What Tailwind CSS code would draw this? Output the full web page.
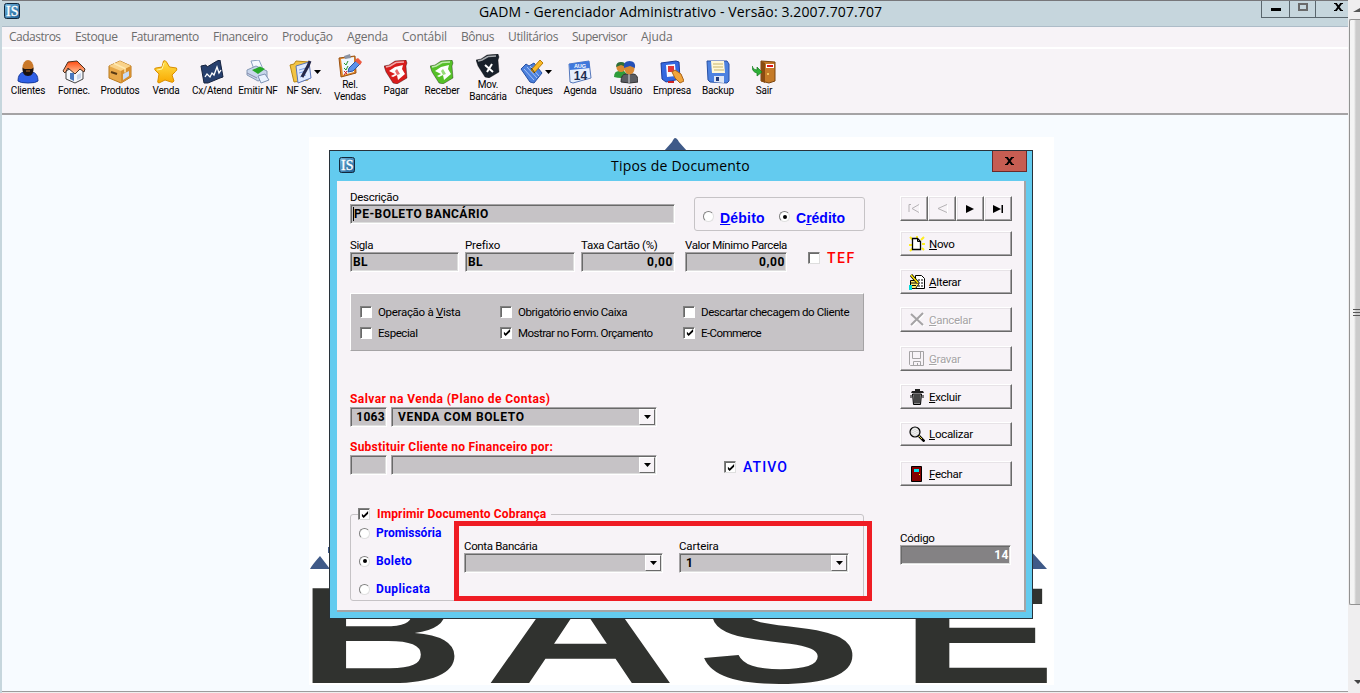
<!DOCTYPE html>
<html lang="pt-BR">
<head>
<meta charset="utf-8">
<title>GADM - Gerenciador Administrativo</title>
<script src="https://cdn.jsdelivr.net/npm/@tailwindcss/browser@4"></script>
</head>
<body class="w-[1360px] h-[693px] overflow-hidden bg-[#f0f0f0] font-['Roboto',sans-serif] text-[11.5px] leading-[14px] tracking-[-0.42px] text-black">
<svg class="absolute size-0">
  <defs>
    <linearGradient id="gOrange" x1="0" y1="0" x2="0" y2="1"><stop offset="0" stop-color="#ffe04a"/><stop offset="1" stop-color="#f9a800"/></linearGradient>
    <linearGradient id="gRoof" x1="0" y1="0" x2="0" y2="1"><stop offset="0" stop-color="#ff4a10"/><stop offset="1" stop-color="#ffc9a0"/></linearGradient>
    <linearGradient id="gIS" x1="0" y1="0" x2="1" y2="1"><stop offset="0" stop-color="#6fb4de"/><stop offset="1" stop-color="#1f5f93"/></linearGradient>
    <symbol id="is" viewBox="0 0 16 16"><rect x=".5" y=".5" width="15" height="15" rx="2" fill="url(#gIS)" stroke="#12283c"/><text x="2" y="12.600" font-family="Liberation Serif, serif" font-size="14" letter-spacing="0" fill="#fff" stroke="#fff" stroke-width=".3">IS</text></symbol>
    <symbol id="check" viewBox="0 0 9 9"><path d="M1 3v3l2 2 5-5V0L3 5z" fill="#000"/></symbol>
    <symbol id="wallet" viewBox="0 0 24 24"><path d="M0 6 5 5l6-4 11-1 1 3-1 3 1 12-10 6-4-1L2 12z" fill="currentColor" stroke="#00000055"/><path d="m2 7 4-1 6-3.500 8-.5" fill="none" stroke="#ffffffa0" stroke-width="1.500"/></symbol>
  </defs>
</svg>
<div class="flex h-[693px]">
  <!-- main window -->
  <div class="relative flex w-[1348px] flex-col overflow-hidden border-l-2 border-[#c6d6dd] bg-[#f7fbff]">
    <header class="flex h-[27px] shrink-0 items-start border-t border-b border-t-[#77777a] border-b-[#adbcc8] bg-[#c6d6dd]">
      <svg class="ml-[2px] mt-[2px] size-4"><use href="#is"/></svg>
      <h1 class="ml-[459px] mt-[1px] w-[410px] whitespace-nowrap font-['Open_Sans',sans-serif] text-[14px] leading-[20px] tracking-[0.12px]">GADM - Gerenciador Administrativo - Versão: 3.2007.707.707</h1>
      <div class="ml-auto flex h-[17px] border-b border-l border-[#5a666d]">
        <div class="flex w-7 justify-center border-r border-[#5a666d] pt-[7px]"><span class="h-[3px] w-[10px] bg-black"></span></div>
        <div class="flex w-[26px] justify-center border-r border-[#5a666d] pt-[2px]"><span class="h-2 w-[10px] border-2 border-[#6a6a6a]"></span></div>
        <div class="flex w-8 justify-end pr-[5px] pt-[2px]"><svg class="h-2 w-[9px]" viewBox="0 0 9 8"><path d="M1.500 0 7.500 8M7.500 0 1.500 8" stroke="#000" stroke-width="2"/><path d="M0 .5h3M6 .5h3M0 7.500h3M6 7.500h3" stroke="#000"/></svg></div>
      </div>
    </header>
    <nav class="flex h-5 shrink-0 items-center bg-[#f7f3f7] pl-[7px] font-['Open_Sans',sans-serif] text-[12px] tracking-[-0.1px] text-[#6d6d6d]">
      <span class="w-[66px] tracking-[-0.5px]">Cadastros</span><span class="w-[56px] tracking-[-0.4px]">Estoque</span><span class="w-[82px] tracking-[-0.45px]">Faturamento</span><span class="w-[69px] tracking-[-0.35px]">Financeiro</span><span class="w-[65px] tracking-[-0.4px]">Produção</span><span class="w-[55px] tracking-[-0.2px]">Agenda</span><span class="w-[59px] tracking-[-0.2px]">Contábil</span><span class="w-[47px] tracking-[-0.5px]">Bônus</span><span class="w-[64px] tracking-[-0.35px]">Utilitários</span><span class="w-[69px] tracking-[-0.5px]">Supervisor</span><span>Ajuda</span>
    </nav>
    <div class="flex h-[68px] shrink-0 items-start border-t-2 border-b-2 border-t-white border-b-[#a5a3a5] bg-[#f7f3f7] pl-[3px] text-center text-[10px] leading-[12px] tracking-[-0.2px] whitespace-nowrap *:flex *:w-[46px] *:flex-col *:items-center *:gap-[1px] *:pt-[11px]">
      <div><svg class="size-6" viewBox="0 0 24 24"><path d="M2 21q0-8 6-9h8q6 1 6 9-2 2-10 2T2 21z" fill="#2f5fe6" stroke="#173a9c"/><ellipse cx="12" cy="7.500" rx="5.500" ry="7.500" fill="#c9782a"/><path d="M6.500 7.500q2 2 3 1.500h5q1 .5 3-1.500.5 8.500-5.500 8.500t-5.500-8.500z" fill="#1a1210"/><path d="M10 11h4" stroke="#b06a2c"/></svg>Clientes</div>
      <div><svg class="size-6" viewBox="0 0 24 24"><path d="M4 11v8l9 4 8-4v-9l-6-5z" fill="#f4f6fb" stroke="#444"/><path d="M1 11 6 2l9-1 8 8-1 3-4-3-5 5-7-6-3 5z" fill="url(#gRoof)" stroke="#4a3020"/><path d="M8 13h4v8l-4-2z" fill="#4a78c0"/><path d="m15 15 4-2v5l-4 2z" fill="#c8d4ea"/></svg>Fornec.</div>
      <div><svg class="size-6" viewBox="0 0 24 24"><path d="M1 6 12 1l11 5v11l-10 6L1 18z" fill="#e8a84a" stroke="#b8781c"/><path d="M1 6 12 1l11 5-10 5z" fill="#f9d28a"/><path d="M13 11v12l10-6V6z" fill="#d68f30"/><path d="m6 3.500 11 5v4" stroke="#ffe8b0" fill="none" stroke-width="1.500"/><path d="m15 14 6-3v5l-6 4z" fill="#c8dcf8"/><path d="m3 12 6 2" stroke="#5a3a14" stroke-width="2"/></svg>Produtos</div>
      <div><svg class="size-6" viewBox="0 0 24 24"><path d="M9.500 1q2-1 3 1l3 5 7 1q1 2-1 3.500L18 15l2 6q-1 2-3 1l-6-2-6 3q-2 0-1-3l1-6-4-4q-1-2 1-2l6-1z" fill="url(#gOrange)" stroke="#d98e00"/><path d="m10 3-2 6-5 1" stroke="#fff3a8" fill="none"/></svg>Venda</div>
      <div><svg class="size-6" viewBox="0 0 24 24"><path d="m1 6 5-1 1 2 10-6 3-1 3 17-3 1-12 5H4z" fill="#27406e" stroke="#16233f"/><path d="m5 17 2-3 3 3 2-4 2 2 3-8 2 6 2-3" stroke="#fff" stroke-width="1.300" fill="none"/></svg>Cx/Atend</div>
      <div><svg class="size-6" viewBox="0 0 24 24"><path d="m5 1 8-1 4 9-8 3z" fill="#f6f9ff" stroke="#8aa0c0"/><path d="m1 10 9-4 11 5v7l-9 3-11-6z" fill="#c8d6ec" stroke="#8598b4"/><path d="m6 10 8-3.500 5 2.500-7 5z" fill="#26a82a"/><path d="m12 16 7-2 4 6-8 3z" fill="#eaf2ff" stroke="#7d92b4"/><path d="m1 13 10 5" stroke="#88a"/></svg>Emitir NF</div>
      <div><div class="flex items-center gap-[1px] self-center pl-[2px]"><svg class="size-6" viewBox="0 0 24 24"><path d="M1 5 5 4l2-3 13 1-1 18-14 2z" fill="#f3c445" stroke="#b98816"/><path d="m7 6 13-4 2 16-13 5z" fill="#dfe9ff" stroke="#5a74b8"/><path d="m10 10 7-2M10 13l7-2M11 17l6-2" stroke="#7a9fe6"/><path d="m21 1-2 5-6 11" fill="none" stroke="#26284a" stroke-width="3"/></svg><svg class="h-1 w-[7px]" viewBox="0 0 7 4"><path d="M0 0h7L3.500 4z"/></svg></div>NF Serv.</div>
      <div class="-mt-[6px]"><svg class="size-6" viewBox="0 0 24 24"><path d="m1 4 16-2 1 17-15 4z" fill="#e58a2c" stroke="#9a5010"/><path d="m3 5 13-2v15L5 21z" fill="#eef6ff"/><path d="m6 2 6-2 1 4-6 1z" fill="#8b93a3"/><path d="m6 9 2 2 2-4M6 14l2 2 2-4" stroke="#23962a" fill="none"/><path d="m6 17 3 3m0-3-3 4" stroke="#d42020"/><path d="m10 18 1-4 8-8 4 3-8 8z" fill="#5b92ec" stroke="#2954a4"/><path d="m18 5 2-1 4 4-2 3-5-4z" fill="#ee5a42"/></svg><span>Rel.<br>Vendas</span></div>
      <div><svg class="size-6 text-[#d81c1c]" viewBox="0 0 24 24"><use href="#wallet"/><path d="m5 11 6-4 8-2-1 4 3 5-7 6-1-5-4 2-2-1 4-2z" fill="#fff"/><path d="m13 9 3 5-3 1-2-4z" fill="#e86a6a"/></svg>Pagar</div>
      <div><svg class="size-6 text-[#55c028]" viewBox="0 0 24 24"><use href="#wallet"/><path d="m5 11 6-4 8-2-1 4 3 5-7 6-1-5-4 2-2-1 4-2z" fill="#fff"/><path d="m13 9 3 5-3 1-2-4z" fill="#96dc78"/></svg>Receber</div>
      <div class="-mt-[6px]"><svg class="size-6 text-[#18202a]" viewBox="0 0 24 24"><use href="#wallet"/><path d="m9 11 8 7M16 10l-5 8" stroke="#fff" stroke-width="2"/></svg><span>Mov.<br>Bancária</span></div>
      <div><div class="flex items-center gap-[1px] pl-[4px]"><svg class="size-6" viewBox="0 0 24 24"><path d="m1 9 5-5 3 2 5-3 8 10-8 10-4-1z" fill="#4c80dc" stroke="#2650a4"/><path d="m4 9 10 11M7 7l10 11M10 6l9 10" stroke="#a8c4f8"/><path d="m11 10 3 3 9-10-3-3z" fill="#f9b928" stroke="#b97c08"/><path d="m11 8 4 5" stroke="#333"/></svg><svg class="h-1 w-[7px]" viewBox="0 0 7 4"><path d="M0 0h7L3.500 4z"/></svg></div>Cheques</div>
      <div><svg class="size-6" viewBox="0 0 24 24"><path d="m1 4 20-3 2 17-18 5-3-1z" fill="#e6eefc" stroke="#5577bb"/><path d="m1 4 20-3 1 7L2 10z" fill="#3f78dc"/><text x="12" y="7.500" text-anchor="middle" font-size="5.500" letter-spacing="0" font-family="Liberation Sans, sans-serif" font-weight="bold" fill="#fff">AUG</text><text x="12.500" y="19.500" text-anchor="middle" font-size="12" letter-spacing="0" font-family="Liberation Sans, sans-serif" font-weight="bold" fill="#1c2c50">14</text></svg>Agenda</div>
      <div><svg class="size-6" viewBox="0 0 24 24"><path d="M0 17q0-6 5-6h5q3 2 3 6-6 2-13 0z" fill="#2f9c3a"/><circle cx="7" cy="7.500" r="4.500" fill="#d88a34"/><path d="M2 7q0-5 5-5t5 5L7 5z" fill="#2e6e38"/><path d="M7 22q0-8 5-8h7q5 0 5 8-8 2-17 0z" fill="#5b5d62" stroke="#333"/><path d="M15 14v9" stroke="#ddd"/><ellipse cx="15.500" cy="8.500" rx="5" ry="6" fill="#d88a34"/><path d="M10 8Q9 1 15.500 1T21 8l-5-2z" fill="#2550b8"/></svg>Usuário</div>
      <div><svg class="size-6" viewBox="0 0 24 24"><path d="m1 3 15-2 3 1 1 17-14 3-4-3z" fill="#3468e0" stroke="#1b3c9c"/><path d="m6 5 9-1 1 12-9 1z" fill="#f6f8ff"/><path d="M8 6h6v6H8z" fill="#e03838"/><path d="m12 12 3-2 6 4 3 7-4 2-5-5z" fill="#f2a53c" stroke="#a9641a"/><path d="M8 22h6" stroke="#c22" stroke-width="2"/></svg>Empresa</div>
      <div><svg class="size-6" viewBox="0 0 24 24"><path d="m1 1 20 0 2 3v17l-2 2-17-1-2-2z" fill="#4d82e0" stroke="#2850a4"/><path d="m5 1 13 0 1 12H6z" fill="#fff8d8"/><path d="M7 4h10M7 7h10M8 10h10" stroke="#c8b46a"/><path d="M8 16h10v7l-10-1z" fill="#dfe7f5"/><path d="M10 17h3v4h-3z" fill="#223a78"/></svg>Backup</div>
      <div><svg class="size-6" viewBox="0 0 24 24"><path d="m9 1 14 1v19l-6 2-8-2z" fill="#c57a28" stroke="#7a4510"/><path d="m9 1 4 2v20l-4-2z" fill="#8a4c12"/><path d="M14 4h8v4h-8z" fill="#fff"/><path d="M15 6h6" stroke="#e01818" stroke-width="2"/><circle cx="16" cy="14" r="1" fill="#ffe070"/><path d="M0 6q1 4 5 4V7l5 5-5 4v-3q-5-1-5-7z" fill="#2eb038" stroke="#147a1e" stroke-width=".7"/></svg>Sair</div>
    </div>

    <!-- desktop artwork behind the dialog -->
    <svg class="ml-[307px] mt-[22px] h-[548px] w-[745px] shrink-0 bg-white" viewBox="309 137 745 548" role="img" aria-label="BASE">
      <path d="M675 138q2 0 4 4l8 9h-23l8-9q2-4 3-4zM310 569q2-4 10-13l10 13zM328 547h4v6h-4zM1030 550l17 19h-17z" fill="#3f5a88"/>
      <text y="683" font-family="Liberation Sans, sans-serif" font-weight="bold" font-size="138" letter-spacing="0" fill="#30322f"><tspan x="297" textLength="168" lengthAdjust="spacingAndGlyphs">B</tspan><tspan x="484" textLength="193" lengthAdjust="spacingAndGlyphs">A</tspan><tspan x="697" textLength="165" lengthAdjust="spacingAndGlyphs">S</tspan><tspan x="900" textLength="156" lengthAdjust="spacingAndGlyphs">E</tspan></text>
    </svg>
    <div class="mt-auto h-[2px] shrink-0 border-b border-b-[#9c9c9c]"></div>
    <div class="h-px shrink-0 bg-[#efefef]"></div>
  </div>
  <!-- outer scrollbar -->
  <div class="flex w-3 flex-col bg-[#efeeef]">
    <div class="flex h-[19px] justify-end pt-2"><svg class="h-[5px] w-[7px]" viewBox="0 0 7 5"><path d="M0 4h7V0z" fill="#555"/></svg></div>
    <div class="ml-[1px] flex h-[586px] items-center justify-end rounded-l-[2px] border border-r-0 border-[#929292] bg-linear-to-r from-[#f4f4f4] from-40% to-[#cbcbcb] to-60%">
      <div class="flex w-[7px] flex-col gap-[2px] *:h-[1px] *:bg-[#555]"><i></i><i></i><i></i></div>
    </div>
    <div class="flex flex-1 items-end justify-end pb-[9px]"><svg class="h-1 w-[6px]" viewBox="0 0 6 4"><path d="M0 0h6v2L4 4z" fill="#444"/></svg></div>
  </div>
</div>

<!-- dialog window -->
<section class="absolute left-[329px] top-[150px] flex h-[469px] w-[704px] flex-col border border-[#28323a] bg-[#63cbef]">
  <header class="flex h-[30px] shrink-0 items-start pl-[9px]">
    <svg class="mt-[6px] size-4"><use href="#is"/></svg>
    <h2 class="ml-[256px] mt-[5px] whitespace-nowrap font-['Open_Sans',sans-serif] text-[14px] leading-[20px] tracking-[0.2px]">Tipos de Documento</h2>
    <div class="ml-auto mr-[5px] flex h-[21px] w-[35px] items-center justify-center border border-t-0 border-[#6a2a2a] bg-[#c65d52]"><svg class="h-2 w-[9px]" viewBox="0 0 9 8"><path d="M1.500 0 7.500 8M7.500 0 1.500 8" stroke="#000" stroke-width="2"/><path d="M0 .5h3M6 .5h3M0 7.500h3M6 7.500h3" stroke="#000"/></svg></div>
  </header>
  <div class="ml-[7px] flex h-[431px] w-[689px] border-r-2 border-b-2 border-[#a5a3a5] bg-[#f7f3f7] pl-[13px] pt-[9px]">
    <div class="w-[550px] shrink-0">
      <div class="flex h-[41px]">
        <div><div class="h-[14px] tracking-[-0.3px]">Descrição</div><div class="flex h-5 w-[325px] items-center border border-[#a5a3a5] border-r-white border-b-white bg-[#c6c3c6] pl-[2px] text-[12px] font-bold tracking-[0.45px] shadow-[inset_1px_1px_#696969,inset_-1px_-1px_#dedede]"><span class="h-[14px] border-l border-black">PE-BOLETO BANCÁRIO</span></div></div>
        <div class="ml-[19px] mt-[7px] flex h-[34px] w-[171px] items-center rounded-[3px] border border-[#c6c3c6] pl-[8px] pt-[7px] font-['Liberation_Sans',sans-serif] text-[14px] font-bold tracking-[0.2px] text-[#0000ff]">
          <span class="mb-[2px] size-[11px] rounded-full border border-[#808080] border-r-[#e0e0e0] border-b-[#e0e0e0] bg-white"></span><span class="ml-[6px] w-[59px]"><u>D</u>ébito</span>
          <span class="mb-[2px] flex size-[11px] items-center justify-center rounded-full border border-[#808080] border-r-[#e0e0e0] border-b-[#e0e0e0] bg-white"><i class="size-1 rounded-full bg-black"></i></span><span class="ml-[6px] tracking-[0px]">C<u>r</u>édito</span>
        </div>
      </div>
      <div class="mt-[7px] flex h-[34px] *:mr-[6px]">
        <div class="w-[109px]"><div class="h-[14px]">Sigla</div><div class="flex h-5 items-center border border-[#a5a3a5] border-r-white border-b-white bg-[#c6c3c6] px-[2px] text-[12px] font-bold tracking-[0.4px] shadow-[inset_1px_1px_#696969,inset_-1px_-1px_#dedede]">BL</div></div>
        <div class="w-[110px]"><div class="h-[14px] tracking-[-0.15px]">Prefixo</div><div class="flex h-5 items-center border border-[#a5a3a5] border-r-white border-b-white bg-[#c6c3c6] px-[2px] text-[12px] font-bold tracking-[0.4px] shadow-[inset_1px_1px_#696969,inset_-1px_-1px_#dedede]">BL</div></div>
        <div class="w-[94px]"><div class="h-[14px] whitespace-nowrap tracking-[-0.3px]">Taxa Cartão (%)</div><div class="flex h-5 items-center justify-end border border-[#a5a3a5] border-r-white border-b-white bg-[#c6c3c6] px-[1px] text-[12px] font-bold tracking-[0.6px] shadow-[inset_1px_1px_#696969,inset_-1px_-1px_#dedede]">0,00</div></div>
        <div class="ml-[4px] w-[102px]"><div class="h-[14px] whitespace-nowrap tracking-[-0.37px]">Valor Mínimo Parcela</div><div class="flex h-5 items-center justify-end border border-[#a5a3a5] border-r-white border-b-white bg-[#c6c3c6] px-[1px] text-[12px] font-bold tracking-[0.6px] shadow-[inset_1px_1px_#696969,inset_-1px_-1px_#dedede]">0,00</div></div>
        <div class="ml-[15px] flex items-center gap-[7px] pt-[6px] text-[14px] font-medium tracking-[1.5px] text-[#ff0000]"><span class="size-3 border border-[#808080] border-r-[#dedede] border-b-[#dedede] bg-white shadow-[inset_1px_1px_#696969]"></span>TEF</div>
      </div>
      <div class="mt-[21px] grid h-[58px] w-[514px] grid-cols-[140px_183px_1fr] grid-rows-[21px_21px] border border-white border-r-[#a5a3a5] border-b-[#a5a3a5] bg-[#c6c3c6] pl-[9px] pt-[7px] *:flex *:items-center *:gap-[6px] *:whitespace-nowrap">
        <label><span class="size-3 border border-[#808080] border-r-white border-b-white bg-white shadow-[inset_1px_1px_#696969]"></span><span class="tracking-[-0.3px]">Operação à <u>V</u>ista</span></label>
        <label><span class="size-3 border border-[#808080] border-r-white border-b-white bg-white shadow-[inset_1px_1px_#696969]"></span>Obrigatório envio Caixa</label>
        <label><span class="size-3 border border-[#808080] border-r-white border-b-white bg-white shadow-[inset_1px_1px_#696969]"></span>Descartar checagem do Cliente</label>
        <label><span class="size-3 border border-[#808080] border-r-white border-b-white bg-white shadow-[inset_1px_1px_#696969]"></span>Especial</label>
        <label><span class="flex size-3 items-center justify-center border border-[#808080] border-r-white border-b-white bg-white pl-px pt-px shadow-[inset_1px_1px_#696969]"><svg class="size-2"><use href="#check"/></svg></span><span class="tracking-[-0.52px]">Mostrar no Form. Orçamento</span></label>
        <label><span class="flex size-3 items-center justify-center border border-[#808080] border-r-white border-b-white bg-white pl-px pt-px shadow-[inset_1px_1px_#696969]"><svg class="size-2"><use href="#check"/></svg></span><span class="tracking-[-0.58px]">E-Commerce</span></label>
      </div>
      <div class="mt-[41px] h-[15px] text-[12px] font-bold tracking-[0.43px] text-[#ff0000]">Salvar na Venda (Plano de Contas)</div>
      <div class="flex h-5 gap-1 text-[12px] font-bold *:border *:border-[#a5a3a5] *:border-r-white *:border-b-white *:bg-[#c6c3c6] *:shadow-[inset_1px_1px_#696969,inset_-1px_-1px_#dedede]">
        <div class="flex w-[37px] items-center justify-end pr-[1px] tracking-[0.3px]">1063</div>
        <div class="flex w-[266px] items-center justify-between p-[1px] pl-[6px] tracking-[0.65px]">VENDA COM BOLETO<span class="flex h-4 w-4 items-center justify-center border border-white border-r-[#696969] border-b-[#696969] bg-[#f7f3f7]"><svg class="h-1 w-[7px]" viewBox="0 0 7 4"><path d="M0 0h7L3.500 4z"/></svg></span></div>
      </div>
      <div class="mt-[13px] h-[15px] text-[12px] font-bold tracking-[0.25px] text-[#ff0000]">Substituir Cliente no Financeiro por:</div>
      <div class="flex h-5">
        <div class="flex gap-1 *:border *:border-[#a5a3a5] *:border-r-white *:border-b-white *:bg-[#c6c3c6] *:shadow-[inset_1px_1px_#696969,inset_-1px_-1px_#dedede]">
          <div class="w-[37px]"></div>
          <div class="flex w-[266px] items-center justify-end p-[1px]"><span class="flex h-4 w-4 items-center justify-center border border-white border-r-[#696969] border-b-[#696969] bg-[#f7f3f7]"><svg class="h-1 w-[7px]" viewBox="0 0 7 4"><path d="M0 0h7L3.500 4z"/></svg></span></div>
        </div>
        <div class="ml-[67px] mt-[4px] flex h-4 items-center gap-[7px] text-[14px] font-medium tracking-[1.1px] text-[#0000ff]"><span class="flex size-3 items-center justify-center border border-[#808080] border-r-[#dedede] border-b-[#dedede] bg-white pl-px pt-px shadow-[inset_1px_1px_#696969]"><svg class="size-2"><use href="#check"/></svg></span>ATIVO</div>
      </div>
      <div class="relative mt-[39px] flex h-[87px] w-[514px] rounded-[3px] border border-[#c6c3c6] text-[12px]">
        <div class="absolute -top-[8px] left-[7px] flex items-center gap-[7px] bg-[#f7f3f7] pr-[5px] font-bold tracking-[0.15px] text-[#ff0000]"><span class="flex size-3 items-center justify-center border border-[#808080] border-r-[#dedede] border-b-[#dedede] bg-white pl-px pt-px shadow-[inset_1px_1px_#696969]"><svg class="size-2"><use href="#check"/></svg></span>Imprimir Documento Cobrança</div>
        <div class="flex w-[113px] flex-col gap-[14px] pl-[8px] pt-[11px] font-bold tracking-[0px] text-[#0000ff] *:flex *:items-center *:gap-[6px]">
          <label><span class="size-[11px] rounded-full border border-[#808080] border-r-[#e0e0e0] border-b-[#e0e0e0] bg-white"></span>Promissória</label>
          <label><span class="flex size-[11px] items-center justify-center rounded-full border border-[#808080] border-r-[#e0e0e0] border-b-[#e0e0e0] bg-white"><i class="size-1 rounded-full bg-black"></i></span><span class="tracking-[0.2px]">Boleto</span></label>
          <label><span class="size-[11px] rounded-full border border-[#808080] border-r-[#e0e0e0] border-b-[#e0e0e0] bg-white"></span><span class="tracking-[0.4px]">Duplicata</span></label>
        </div>
        <div class="mt-[24px] w-[199px] text-[11.5px]"><div class="h-[14px] tracking-[-0.35px]">Conta Bancária</div><div class="flex h-5 items-center justify-end border border-[#a5a3a5] border-r-white border-b-white bg-[#c6c3c6] p-[1px] shadow-[inset_1px_1px_#696969,inset_-1px_-1px_#dedede]"><span class="flex h-4 w-4 items-center justify-center border border-white border-r-[#696969] border-b-[#696969] bg-[#f7f3f7]"><svg class="h-1 w-[7px]" viewBox="0 0 7 4"><path d="M0 0h7L3.500 4z"/></svg></span></div></div>
        <div class="ml-[16px] mt-[24px] w-[170px] text-[11.5px]"><div class="h-[14px] tracking-[-0.12px]">Carteira</div><div class="flex h-5 items-center justify-between border border-[#a5a3a5] border-r-white border-b-white bg-[#c6c3c6] p-[1px] pl-[6px] text-[12px] font-bold shadow-[inset_1px_1px_#696969,inset_-1px_-1px_#dedede]">1<span class="flex h-4 w-4 items-center justify-center border border-white border-r-[#696969] border-b-[#696969] bg-[#f7f3f7]"><svg class="h-1 w-[7px]" viewBox="0 0 7 4"><path d="M0 0h7L3.500 4z"/></svg></span></div></div>
        <div class="absolute left-[103px] top-[6px] h-[80px] w-[418px] border-5 border-[#ef1c24]"></div>
      </div>
    </div>
    <div class="flex w-[112px] shrink-0 flex-col pt-[6px] tracking-[-0.3px]">
      <div class="flex h-[25px] *:flex *:w-7 *:items-center *:justify-center *:border *:border-white *:border-r-[#696969] *:border-b-[#696969] *:shadow-[inset_-1px_-1px_#a5a3a5,inset_1px_1px_#e7e3e7]">
        <div><svg class="h-[9px] w-3" viewBox="0 0 12 9"><path d="M3 .5H1v7.500M11 .5 4 4.500l7 4" fill="none" stroke="#b5b2b5"/><path d="M11.500 1v8" stroke="#fff"/></svg></div>
        <div><svg class="h-[9px] w-3" viewBox="0 0 12 9"><path d="m11 .5-9 4 9 4" fill="none" stroke="#b5b2b5"/><path d="M11.500 1v8" stroke="#fff"/></svg></div>
        <div><svg class="h-2 w-2" viewBox="0 0 8 8"><path d="m0 0 8 4-8 4z"/></svg></div>
        <div><svg class="h-2 w-[10px]" viewBox="0 0 10 8"><path d="m0 0 8 4-8 4zM8.500 0H10v8H8.500z"/></svg></div>
      </div>
      <div class="mt-[10px] flex flex-col gap-[13px] *:flex *:h-[25px] *:items-center *:gap-[4px] *:border *:border-white *:border-r-[#696969] *:border-b-[#696969] *:pl-[8px] *:shadow-[inset_-1px_-1px_#a5a3a5,inset_1px_1px_#e7e3e7]">
        <div><svg class="size-4" viewBox="0 0 16 16"><path d="m1 1 3 3M8 0v3m7-2-3 3m4 4h-3m2 6-2-2M0 9h3m-2 6 3-3" stroke="#ffee20" stroke-width="2"/><path d="M3.500 2.500h5l3 3v8h-8z" fill="#fff" stroke="#000" stroke-width="1.300"/><path d="M8.500 2.500v3h3" fill="none" stroke="#000"/></svg><span><u>N</u>ovo</span></div>
        <div><svg class="size-4" viewBox="0 0 16 16"><path d="M6.500 1.500h6l3 3v10h-9z" fill="#fff" stroke="#000"/><path d="M9 6h5M9 9h5M9 12h5" stroke="#000" stroke-dasharray="2 1"/><path d="M1.500 6.500h6l2 4-3 4h-5z" fill="#ffe96a" stroke="#000"/><path d="m2 1 7 8" stroke="#000" stroke-width="3"/><path d="m2 1 7 8" stroke="#ffe800" stroke-width="1.500"/><path d="M2 9h5M3 11.500h4" stroke="#000"/><path d="M0 11h3v5H0z" fill="#00d8d8"/></svg><span><u>A</u>lterar</span></div>
        <div class="text-[#a5a3a5] [text-shadow:1px_1px_#fff]"><svg class="size-4" viewBox="0 0 16 16"><path d="m3 3 12 11M15 2 3 14" stroke="#fff" stroke-width="2"/><path d="m2 2 12 11M14 1 2 13" stroke="#a5a3a5" stroke-width="2"/></svg><span><u>C</u>ancelar</span></div>
        <div class="mt-[1px] text-[#a5a3a5] [text-shadow:1px_1px_#fff]"><svg class="size-4" viewBox="0 0 16 16"><path d="M.5 .5h14v14h-13l-1-1zM3.500 .5v7h8v-7M4.500 14.500v-4h7v4M8.500 12v2" fill="none" stroke="#a5a3a5"/></svg><span><u>G</u>ravar</span></div>
        <div><svg class="size-4" viewBox="0 0 16 16"><path d="M6 0h5v2h3l1 2H2l1-2h3z" fill="#222"/><path d="M3.500 5h9l-1 10.500h-7z" fill="#8a8a8a" stroke="#000"/><path d="M6 6v8M8 6v8M10 6v8" stroke="#000"/><path d="M2 6v3M14 6v3" stroke="#000"/></svg><span><u>E</u>xcluir</span></div>
        <div class="!h-6"><svg class="size-4" viewBox="0 0 16 16"><circle cx="6" cy="6" r="5" fill="#dcdcdc" stroke="#000" stroke-width="1.200"/><path d="M4 3v5M6 2v8M8 3v6" stroke="#fff" stroke-dasharray="1 1"/><path d="m10 10 5.500 5.500" stroke="#000" stroke-width="2.500"/><path d="m10 10 3 3" stroke="#e8d840"/></svg><span><u>L</u>ocalizar</span></div>
        <div class="mt-[2px]"><svg class="size-4" viewBox="0 0 16 16"><path d="M2.500 .5h10v15h-10z" fill="#840000" stroke="#000"/><path d="M5 3h5v3H5z" fill="#00e0e8"/><path d="M10 8h1v1h-1z" fill="#ff0"/></svg><span><u>F</u>echar</span></div>
      </div>
      <div class="mt-[45px] h-[14px]">Código</div>
      <div class="flex h-5 w-[111px] items-center justify-end border border-[#a5a3a5] border-r-white border-b-white bg-[#848284] pr-[1px] text-[12px] font-bold tracking-[0.5px] text-white shadow-[inset_1px_1px_#696969,inset_-1px_-1px_#dedede]">14</div>
    </div>
  </div>
</section>
</body>
</html>
